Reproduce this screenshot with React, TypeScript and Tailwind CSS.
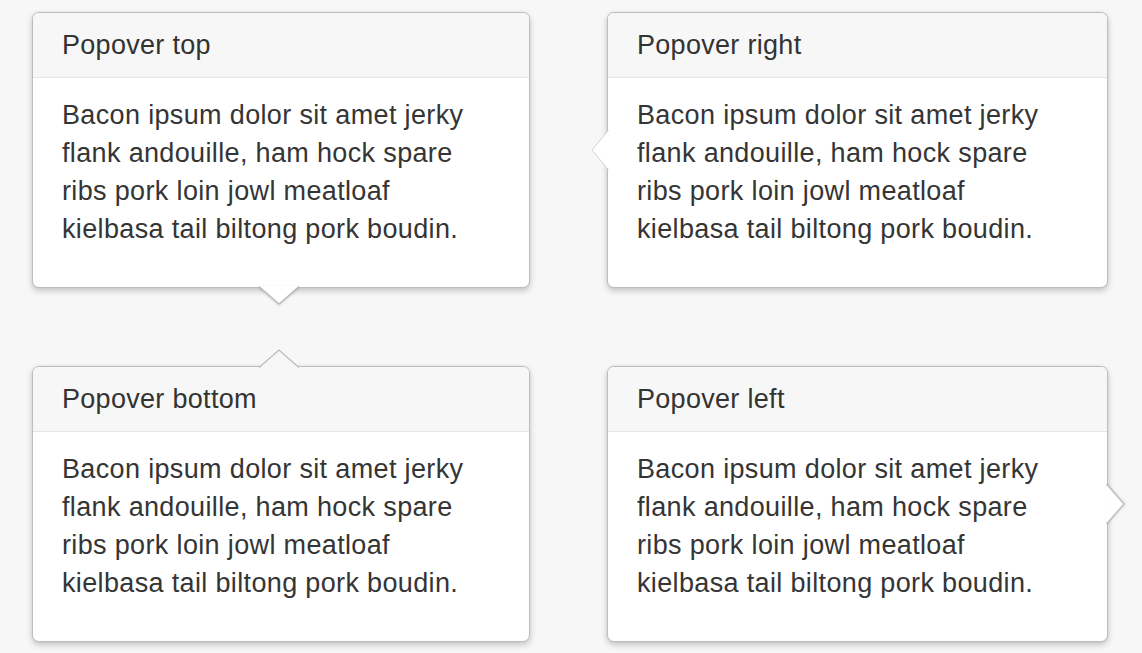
import React from "react";

type Side = "top" | "right" | "bottom" | "left";

const lines = [
  "Bacon ipsum dolor sit amet jerky",
  "flank andouille, ham hock spare",
  "ribs pork loin jowl meatloaf",
  "kielbasa tail biltong pork boudin.",
];

function Arrow({ side }: { side: Side }) {
  const stroke = "#b9b9b9";
  if (side === "top") {
    // popover sits above its target, arrow points down
    return (
      <svg
        width="40"
        height="20"
        viewBox="0 0 40 20"
        className="absolute top-full left-1/2 -ml-[22px] -mt-px drop-shadow-[0_1px_1px_rgba(0,0,0,0.18)]"
      >
        <polygon points="0,0 20,18 40,0" fill="#ffffff" />
        <polyline points="0,0.5 20,18 40,0.5" fill="none" stroke={stroke} strokeWidth="1.2" />
      </svg>
    );
  }
  if (side === "bottom") {
    return (
      <svg
        width="40"
        height="20"
        viewBox="0 0 40 20"
        className="absolute bottom-full left-1/2 -ml-[22px] -mb-px"
      >
        <polygon points="0,20 20,2 40,20" fill="#f7f7f7" />
        <polyline points="0,19.5 20,2 40,19.5" fill="none" stroke={stroke} strokeWidth="1.2" />
      </svg>
    );
  }
  if (side === "right") {
    // arrow on the left edge, pointing left
    return (
      <svg
        width="20"
        height="40"
        viewBox="0 0 20 40"
        className="absolute right-full top-1/2 -mt-[20px] -mr-px"
      >
        <polygon points="20,0 3,20 20,40" fill="#ffffff" />
        <polyline points="19.5,0 3,20 19.5,40" fill="none" stroke="#d2d2d2" strokeWidth="1" />
      </svg>
    );
  }
  return (
    <svg
      width="20"
      height="40"
      viewBox="0 0 20 40"
      className="absolute left-full top-1/2 -mt-[20px] -ml-px drop-shadow-[1px_0_1px_rgba(0,0,0,0.12)]"
    >
      <polygon points="0,0 18,20 0,40" fill="#ffffff" />
      <polyline points="0.5,0 18,20 0.5,40" fill="none" stroke={stroke} strokeWidth="1.2" />
    </svg>
  );
}

function Popover({ title, side }: { title: string; side: Side }) {
  return (
    <div className="relative h-[276px] rounded-[7px] border border-[#bdbdbd] bg-white shadow-[0_3px_6px_rgba(0,0,0,0.2),0_0_3px_rgba(0,0,0,0.06)]">
      <div className="h-[65px] rounded-t-[6px] border-b border-[#e4e4e4] bg-[#f7f7f7] pl-[29px] pt-[17px] text-[27px] leading-[30px] tracking-[0.3px] text-[#333]">
        {title}
      </div>
      <div className="pl-[29px] pt-[18px] text-[27px] leading-[38px] tracking-[0.35px] text-[#353535]">
        {lines.map((l) => (
          <div key={l}>{l}</div>
        ))}
      </div>
      <Arrow side={side} />
    </div>
  );
}

export default function App() {
  return (
    <div
      className="min-h-[653px] w-[1142px] bg-[#f7f7f7] pl-[32px] pt-[12px]"
      style={{ fontFamily: '"Liberation Sans", Arial, sans-serif' }}
    >
      <div className="grid grid-cols-[498px_501px] gap-x-[77px] gap-y-[78px]">
        <Popover title="Popover top" side="top" />
        <Popover title="Popover right" side="right" />
        <Popover title="Popover bottom" side="bottom" />
        <Popover title="Popover left" side="left" />
      </div>
    </div>
  );
}
